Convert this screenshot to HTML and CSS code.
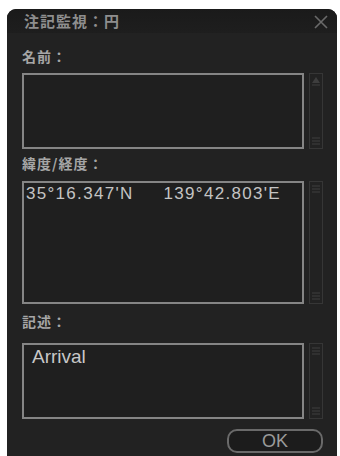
FILE: index.html
```html
<!DOCTYPE html>
<html lang="ja">
<head>
<meta charset="utf-8">
<link rel="stylesheet" href="styles.css">
</head>
<body>
<div class="dialog">
  <div class="titlebar">
    <span class="title">注記監視：円</span>
    <svg class="close" width="14" height="14" viewBox="0 0 14 14"><path d="M1 1L13 13M13 1L1 13" stroke="#6a6a6a" stroke-width="1.6" fill="none"/></svg>
  </div>
  <div class="content">
    <div class="label l1">名前：</div>
    <div class="field f1">
      <div class="box"></div>
      <div class="scroll">
        <svg class="sc-top" width="12" height="14" viewBox="0 0 12 14"><path d="M6 2L10 8H2Z" fill="#3e3e3e"/><path d="M2 10H10" stroke="#3e3e3e"/></svg>
        <svg class="sc-bot" width="12" height="12" viewBox="0 0 12 12"><path d="M2 3H10M2 6H10M2 9H10" stroke="#3e3e3e"/></svg>
      </div>
    </div>
    <div class="label l2">緯度/経度：</div>
    <div class="field f2">
      <div class="box"><span class="coord">35°16.347'N</span><span class="coord">139°42.803'E</span></div>
      <div class="scroll">
        <svg class="sc-top" width="12" height="12" viewBox="0 0 12 12"><path d="M2 3H10M2 6H10M2 9H10" stroke="#3e3e3e"/></svg>
        <svg class="sc-bot" width="12" height="12" viewBox="0 0 12 12"><path d="M2 3H10M2 6H10M2 9H10" stroke="#3e3e3e"/></svg>
      </div>
    </div>
    <div class="label l3">記述：</div>
    <div class="field f3">
      <div class="box"><span class="desc">Arrival</span></div>
      <div class="scroll">
        <svg class="sc-top" width="12" height="12" viewBox="0 0 12 12"><path d="M2 3H10M2 6H10M2 9H10" stroke="#3e3e3e"/></svg>
        <svg class="sc-bot" width="12" height="12" viewBox="0 0 12 12"><path d="M2 3H10M2 6H10M2 9H10" stroke="#3e3e3e"/></svg>
      </div>
    </div>
    <div class="actions">
      <button class="ok">OK</button>
    </div>
  </div>
</div>
</body>
</html>
```

FILE: styles.css
```css
html, body {
  margin: 0;
  padding: 0;
  background: #ffffff;
  overflow: hidden;
  height: 456px;
}
body {
  font-family: "Noto Sans CJK JP", "Noto Sans", sans-serif;
}
.dialog {
  margin: 9px 0 0 7px;
  width: 330px;
  height: 447px;
  background: #222222;
  border-radius: 9px 9px 0 0;
  overflow: hidden;
  display: flex;
  flex-direction: column;
}
.titlebar {
  height: 24px;
  flex: none;
  background: linear-gradient(#1a1a1a, #1e1e1e);
  display: flex;
  align-items: center;
  justify-content: space-between;
  padding: 0 9px 0 17px;
}
.title {
  color: #8e8e8e;
  font-size: 15px;
  letter-spacing: 1px;
  font-weight: bold;
  line-height: 24px;
}
.close {
  margin-top: 1px;
}
.content {
  display: flex;
  flex-direction: column;
  padding: 0 14px 0 15px;
}
.label {
  color: #a6a6a6;
  font-size: 14px;
  font-weight: bold;
  letter-spacing: 1px;
  line-height: 20px;
  height: 20px;
}
.l1 { margin-top: 13px; }
.l2 { margin-top: 4px; }
.l3 { margin-top: 7px; }
.field {
  display: flex;
  gap: 5px;
}
.f1 { margin-top: 7px; height: 76px; }
.f2 { margin-top: 8px; height: 123px; }
.f3 { margin-top: 12px; height: 76px; }
.box {
  flex: none;
  width: 282px;
  box-sizing: border-box;
  border: 2px solid #858585;
  background: #1f1f1f;
  display: flex;
  align-items: flex-start;
  padding: 0 0 0 2px;
}
.scroll {
  flex: none;
  width: 14px;
  box-sizing: border-box;
  border: 1px solid #363636;
  display: flex;
  flex-direction: column;
  justify-content: space-between;
  align-items: center;
  padding: 1px 0;
}
.coord {
  color: #c4c4c4;
  font-family: "Liberation Sans", sans-serif;
  font-size: 17px;
  letter-spacing: 1.3px;
  line-height: 22px;
}
.coord + .coord {
  margin-left: 30px;
}
.desc {
  color: #c8c8c8;
  font-family: "Liberation Sans", sans-serif;
  font-size: 19px;
  line-height: 22px;
  margin-left: 6px;
  margin-top: 1px;
}
.actions {
  display: flex;
  justify-content: flex-end;
  margin-top: 10px;
}
.ok {
  width: 96px;
  height: 24px;
  box-sizing: border-box;
  border: 2px solid #6a6a6a;
  border-radius: 10px;
  background: #1c1c1c;
  color: #9a9a9a;
  font-family: "Liberation Sans", sans-serif;
  font-size: 18px;
  font-weight: normal;
  line-height: 20px;
  padding: 0;
}
```
